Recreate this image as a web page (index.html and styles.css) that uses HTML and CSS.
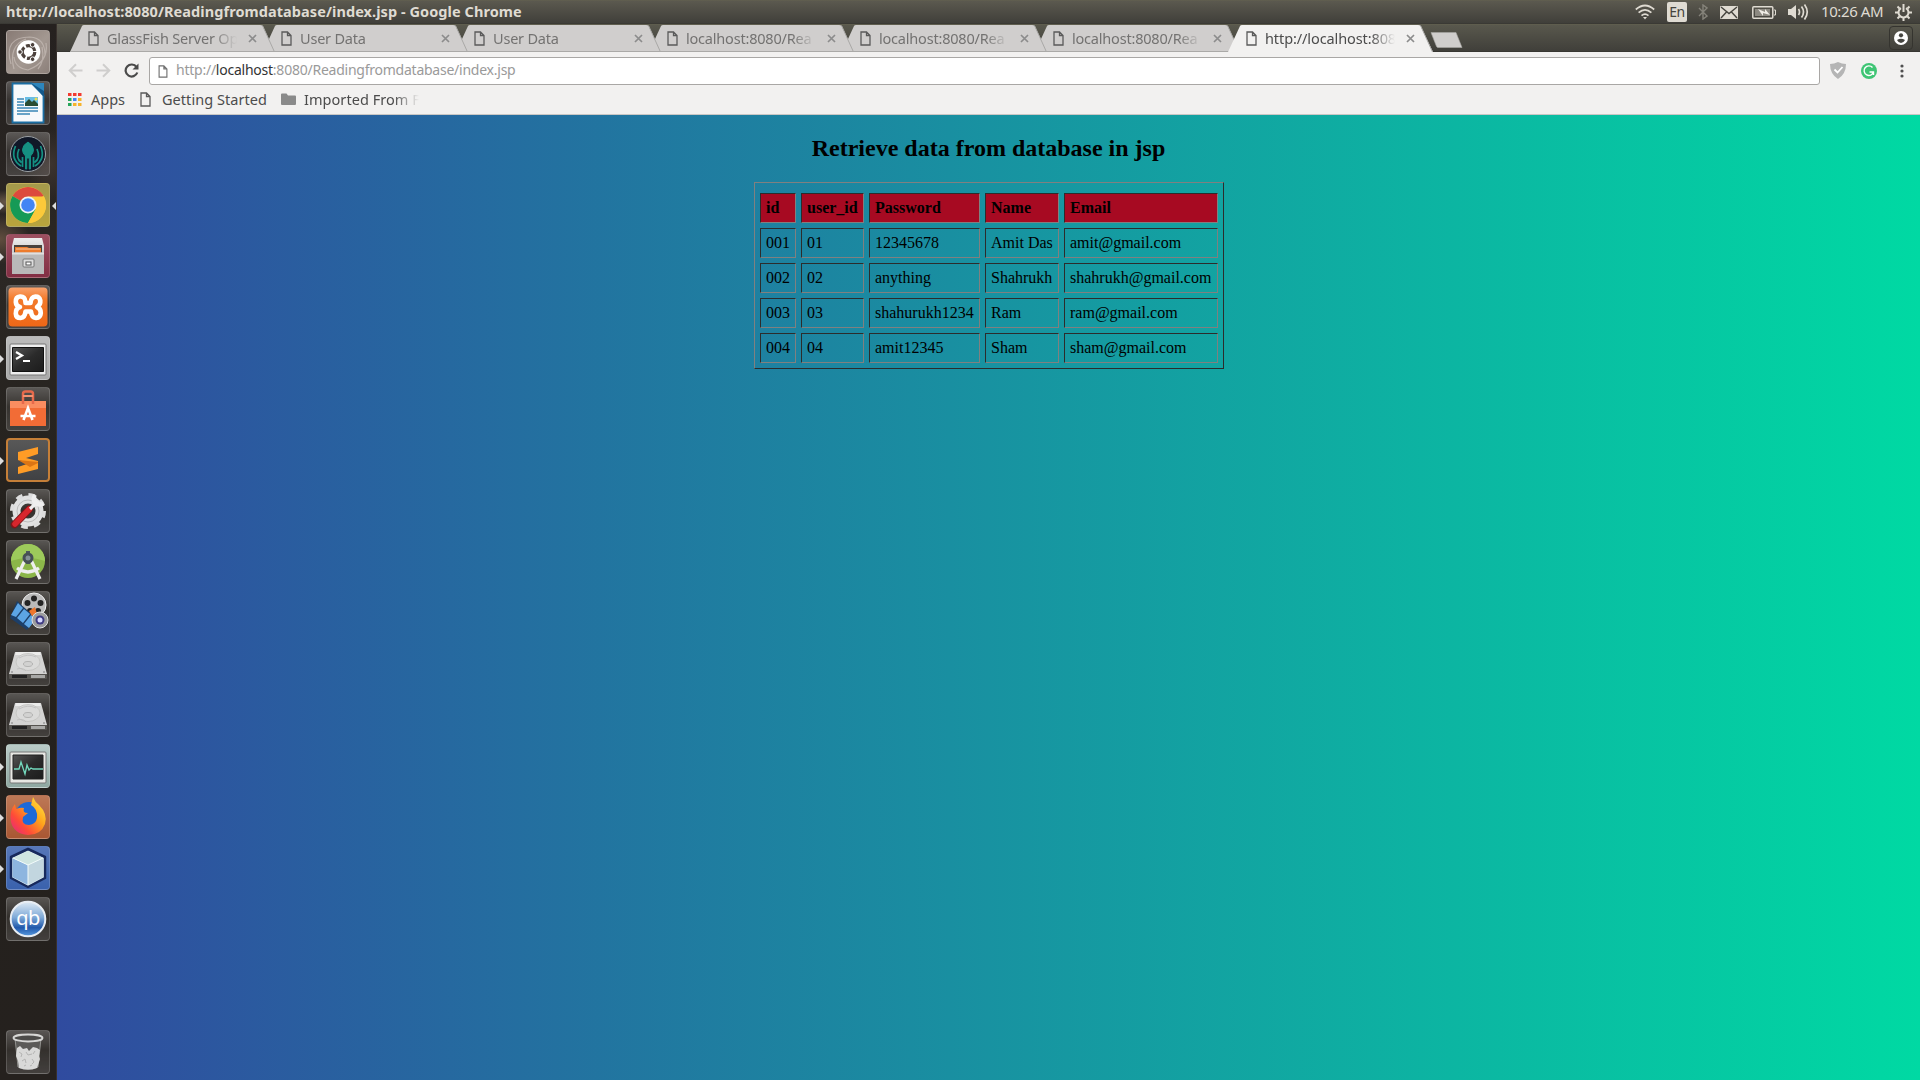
FILE: index.html
```html
<!DOCTYPE html>
<html lang="en">
<head>
<meta charset="utf-8">
<title>http://localhost:8080/Readingfromdatabase/index.jsp</title>
<link rel="stylesheet" href="styles.css">
</head>
<body>
<svg class="defs" width="0" height="0" aria-hidden="true">
  <defs>
    <symbol id="doc" viewBox="0 0 11 15"><path d="M1 1h5.500L10 4.500V14H1zM6.500 1v3.500H10" fill="none" stroke="currentColor" stroke-width="1.300"/></symbol>
    <symbol id="close" viewBox="0 0 9 9"><path d="M1 1l7 7M8 1L1 8" stroke="#8c8c8c" stroke-width="1.700"/></symbol>
    <symbol id="tab-shape" viewBox="0 0 205 28"><path d="M0 28L12 2Q12.500 1 14 1H190Q192 1 192.700 2L205 28z" fill="currentColor"/><path d="M192.500 1.500L204.500 28" stroke="#a9a8a6" fill="none"/></symbol>
    <symbol id="disk" viewBox="0 0 44 44">
      <path d="M3 31h38v5q0 1-1 1H4q-1 0-1-1z" fill="#55534f"/><path d="M6 33h15v3H6z" fill="#222"/><path d="M25 33h14v3H25z" fill="#a8a8a6"/>
      <path d="M9 10h26l6 22H3z" fill="#d3d3d2"/><path d="M10 10h24l1 3H9z" fill="#ececeb"/>
      <ellipse cx="22" cy="20" rx="12" ry="8.500" fill="#dadad9" stroke="#c0c0be" stroke-width=".8"/><ellipse cx="22" cy="22" rx="4.500" ry="2.500" fill="#d2d2d1" stroke="#a9a9a8" stroke-width=".8"/>
      <path d="M13 16q9-5 17-1M11 27q6-2 9 2" stroke="#bbb" stroke-width=".8" fill="none"/><circle cx="6" cy="30" r=".8" fill="#777"/><circle cx="38" cy="30" r=".8" fill="#777"/>
    </symbol>
    <linearGradient id="metal" x2="0" y2="1"><stop stop-color="#eee"/><stop offset="1" stop-color="#999"/></linearGradient>
    <linearGradient id="orange" x2="0" y2="1"><stop stop-color="#f9a26c"/><stop offset=".3" stop-color="#f37a2b"/><stop offset="1" stop-color="#ee6717"/></linearGradient>
    <linearGradient id="screen" x2="1" y2="1"><stop stop-color="#555"/><stop offset=".5" stop-color="#2b2b2b"/><stop offset="1" stop-color="#1c1c1c"/></linearGradient>
    <linearGradient id="fox" x1="1" x2="0" y2="1"><stop stop-color="#fff04a"/><stop offset=".4" stop-color="#ffa41c"/><stop offset=".7" stop-color="#ff4b38"/><stop offset="1" stop-color="#e0208c"/></linearGradient>
    <linearGradient id="qb" x2="0" y2="1"><stop stop-color="#dfeaf4"/><stop offset=".45" stop-color="#7faad8"/><stop offset=".75" stop-color="#2159ab"/><stop offset="1" stop-color="#5a9be0"/></linearGradient>
  </defs>
</svg>
<div class="desktop">
  <header class="panel">
    <div class="window-title">http://localhost:8080/Readingfromdatabase/index.jsp - Google Chrome</div>
    <div class="indicators">
      <svg class="wifi" width="20" height="16" viewBox="0 0 20 16" fill="none" stroke="#dfdbd2" stroke-width="1.700"><path d="M.8 5.500Q10-2.500 19.200 5.500M3.600 8.700Q10 3 16.400 8.700M6.500 11.600Q10 8.500 13.500 11.600"/><path d="M8 13h4l-2 2.500z" fill="#dfdbd2" stroke="none"/></svg>
      <span class="lang">En</span>
      <svg class="bluetooth" width="10" height="16" viewBox="0 0 10 16" fill="none" stroke="#85837a" stroke-width="1.400"><path d="M1 4l8 8-4 3V1l4 3-8 8"/></svg>
      <svg class="mail" width="18" height="13" viewBox="0 0 18 13"><rect width="18" height="13" rx="1" fill="#dfdbd2"/><path d="M1 1l8 6.500L17 1M1 12l5.500-6M17 12l-5.500-6" fill="none" stroke="#45443e" stroke-width="1.400"/></svg>
      <svg class="battery" width="24" height="13" viewBox="0 0 24 13"><rect x=".8" y=".8" width="20" height="11.400" rx="1" fill="none" stroke="#dfdbd2" stroke-width="1.500"/><path d="M3 3h15v7H3z" fill="#8c8981"/><path d="M22 4h1.500v5H22" fill="none" stroke="#dfdbd2"/><path d="M6 3l7 3V3l5 6-7-2v3z" fill="#efece5"/></svg>
      <svg class="volume" width="21" height="18" viewBox="0 0 21 18"><path d="M0 6h3l5-4v14l-5-4H0z" fill="#dfdbd2"/><path d="M10.500 6q2 3 0 6M13.500 3.500q4 5.500 0 11M16.500 1.500q5.500 7.500 0 15" fill="none" stroke="#dfdbd2" stroke-width="1.700"/></svg>
      <span class="clock">10:26 AM</span>
      <svg class="gear" width="17" height="17" viewBox="0 0 17 17" fill="none" stroke="#dfdbd2" stroke-width="2"><path d="M6 4.200A5 5 0 1 0 11 4.200M8.500 0v8"/><path d="M2.500 2.500l2 2M14.500 2.500l-2 2M0 8.500h3M14 8.500h3M2.500 14.500l2-2M14.500 14.500l-2-2M8.500 14v3"/></svg>
    </div>
  </header>
  <div class="workspace">
    <nav class="launcher">
      <div class="tile dash"><svg viewBox="0 0 44 44"><g fill="none" stroke="#c7beb8" stroke-width="1.200" opacity=".7"><path d="M5 34Q-3 7 24 7Q39 8 39 25M8 39Q2 16 20 9M40 13Q43 32 22 40Q9 38 8 27M32 39Q39 31 36 17"/></g><circle cx="22.500" cy="22" r="11.800" fill="#fff"/><circle cx="22.500" cy="22" r="6.300" fill="none" stroke="#4c413c" stroke-width="3.200" stroke-dasharray="11.200 2"/><g fill="#4c413c" stroke="#fff"><circle cx="14" cy="22" r="2.300"/><circle cx="26.600" cy="14.800" r="2.300"/><circle cx="26.600" cy="29.200" r="2.300"/></g></svg></div>
      <div class="tile glass"><svg viewBox="0 0 44 44"><path d="M6.500 2.500H26L37.500 14v27.500h-31z" fill="#f6f9fb" stroke="#1b6ea3" stroke-width="1.800"/><path d="M25 2h13v14z" fill="#2d86bd"/><path d="M25 2l13 14V10z" fill="#14588a"/><path d="M11 18h7M11 21h7M11 24h7M11 27h21M11 30h21M11 33h13" stroke="#3887b7" stroke-width="1.600"/><path d="M19 16h13v9H19z" fill="#68bde4"/><path d="M19 25v-3l4-4 3 3 2-2 4 4v2z" fill="#294c32"/><circle cx="30" cy="18" r="1.500" fill="#eadb55"/></svg></div>
      <div class="tile glass"><svg viewBox="0 0 44 44"><circle cx="22" cy="22" r="17.500" fill="#101727" stroke="#9ba1a5"/><path d="M22 10q5.500 3 5.500 8 0 3-3 6v13h-1.200V26h-2.600v11h-1.200V24q-3-3-3-6 0-5 5.500-8" fill="#159082" stroke="#159082"/><g fill="none" stroke="#159082" stroke-width="1.700"><path d="M9.500 14Q4 27 15 34M13 17Q9 26 15.500 30.500M34.500 14q5.500 13-5.500 20M31 17q4 9-2.500 13.500M16.500 25v10M27.500 25v10"/></g></svg></div>
      <div class="tile chrome running focused"><svg viewBox="0 0 44 44"><circle cx="22" cy="22" r="18" fill="#fbc93a"/><path d="M22 22L6.500 13A18 18 0 0 1 37.600 13z" fill="#dc4a3d"/><path d="M22 22L6.500 13A18 18 0 0 0 22 40l7.800-14z" fill="#159a56"/><path d="M22 13.500H38A18 18 0 0 1 22 40l7.500-13.500z" fill="#fbc93a"/><circle cx="22" cy="22" r="8.500" fill="#eff4f5"/><circle cx="22" cy="22" r="6.800" fill="#4285f4"/></svg></div>
      <div class="tile files running"><svg viewBox="0 0 44 44"><path d="M8 4h28l2 8v28H6V12z" fill="url(#metal)"/><path d="M8 11h28v8H8z" fill="#49423d"/><path d="M9 13h12l2 1h12v5H9z" fill="#ed7c2d"/><path d="M10 15h24" stroke="#f7c6a1"/><path d="M6 18.500h32V40H6z" fill="#b9b9b9"/><path d="M6 18.500h32v2H6z" fill="#e0e0e0"/><rect x="17" y="25" width="11" height="8" rx="1" fill="#ddd" stroke="#777"/><rect x="20" y="28" width="5" height="3" fill="#fff" stroke="#555"/></svg></div>
      <div class="tile glass"><svg viewBox="0 0 44 44"><rect x="2.500" y="2.500" width="39" height="39" rx="4" fill="url(#orange)"/><path d="M19.500 17Q19 11 14 11.500 9.500 12 9.800 17 10 21 14 22 9.500 23.500 9.800 28.500 10 33 14.500 33 19 32.500 19.500 26.500H25Q25.500 32.500 30 33 34.500 32.500 34.800 28 34.800 23.500 31 22 34.800 20 34.300 15.500 33.500 11.500 29.500 11.500 25 12 24.500 18H19.500Z" fill="none" stroke="#fff" stroke-width="4.600" stroke-linejoin="round"/></svg></div>
      <div class="tile terminal running"><svg viewBox="0 0 44 44"><rect x="4" y="8" width="36" height="31" rx="1" fill="#eee" stroke="#777"/><path d="M6.500 11.500h31v24h-31z" fill="url(#screen)" stroke="#111"/><path d="M10 16l6 3.500-6 3.500M17 25h7" fill="none" stroke="#fff" stroke-width="2.200"/></svg></div>
      <div class="tile glass"><svg viewBox="0 0 44 44"><path d="M4 14h36v25H4z" fill="#f26c36"/><path d="M4 14h36v7H4z" fill="#fa8d60"/><path d="M17 17V7q0-2.500 2.500-2.500h5Q27 4.500 27 7v10" fill="none" stroke="#e6694b" stroke-width="2.500"/><path d="M17 9h10" stroke="#f29271" stroke-width="2"/><path d="M17.500 33l4.500-12 4.500 12M14.500 29h15" fill="none" stroke="#fff" stroke-width="2.600"/></svg></div>
      <div class="tile sublime running"><svg viewBox="0 0 44 44"><path d="M12 14l20-5v7l-12 4 12 3v8l-20 5v-7l12-4-12-3z" fill="#ff9c26"/><path d="M12 22l20 2v1l-8 4z" fill="#dc7514"/></svg></div>
      <div class="tile glass"><svg viewBox="0 0 44 44"><circle cx="22" cy="22" r="11.500" fill="none" stroke="#e1e1e1" stroke-width="8"/><circle cx="22" cy="22" r="16" fill="none" stroke="#ddd" stroke-width="4" stroke-dasharray="6.500 6.060"/><circle cx="22" cy="22" r="11" fill="none" stroke="#bcbcbc"/><path d="M8.500 35.500L23 20.500" stroke="#7f1618" stroke-width="7.500" stroke-linecap="round"/><path d="M9 35L23.500 20" stroke="#d8262d" stroke-width="5.500" stroke-linecap="round"/><path d="M24 20l7-7M29 6q-2 8 8 9M29 6q-4 4 0 8.500 4 3 8.500.5" fill="none" stroke="#eee" stroke-width="3.200"/></svg></div>
      <div class="tile glass"><svg viewBox="0 0 44 44"><circle cx="22" cy="21" r="17" fill="#8bb649"/><path d="M5 21a17 17 0 0 1 34 0q-17-6-34 0" fill="#9dca5b"/><path d="M10 39l9-19M34 39l-9-19M11 28q11 8 22 0" fill="none" stroke="#eee" stroke-width="3.200"/><path d="M22 11v13" stroke="#4c585c" stroke-width="4"/><circle cx="22" cy="18" r="4" fill="#839095" stroke="#465055" stroke-width="3"/></svg></div>
      <div class="tile glass"><svg viewBox="0 0 44 44"><circle cx="28" cy="14" r="12" fill="#bbb" stroke="#eee"/><g fill="#242424"><circle cx="28" cy="7.500" r="3"/><circle cx="34.500" cy="12" r="3"/><circle cx="32" cy="20" r="3"/><circle cx="21.500" cy="12" r="3"/><circle cx="24" cy="20" r="3"/></g><path d="M11 10l19 17-9 12L4 27z" fill="#1c3f69"/><path d="M12 12l5 5-7 9-5-2zM18 18l6 5-7 9-6-5zM25 24l5 4-7 9-5-4z" fill="#5ca5e5"/><path d="M23 20l6-4 2 7-5 2z" fill="#ee762d"/><circle cx="34" cy="29" r="8" fill="#9c9c9e" stroke="#e1e1e1"/><circle cx="34" cy="29" r="4.500" fill="#403c83"/><circle cx="34" cy="29" r="2.500" fill="#d6d8ff"/></svg></div>
      <div class="tile glass"><svg><use href="#disk"/></svg></div>
      <div class="tile glass"><svg><use href="#disk"/></svg></div>
      <div class="tile monitor running"><svg viewBox="0 0 44 44"><rect x="4" y="8" width="36" height="31" rx="1" fill="#e7e7e3" stroke="#777"/><path d="M7 11h30v24H7z" fill="url(#screen)" stroke="#222"/><path d="M8 25h5l2-7 4 12 2-9 2 5 2-2 2 1h10" fill="none" stroke="#73d9bd" stroke-width="1.300"/></svg></div>
      <div class="tile firefox running"><svg viewBox="0 0 44 44"><circle cx="23" cy="21" r="14" fill="#1e69d8"/><path d="M27 2q2 5 6 8 9 9 6 19-4 11-17 11Q8 39 5 27 3 16 9 9l1 5q5-2 8-1-2 5 4 5l-5 4q-2 8 6 8 7-1 8-7 1-9-6-13z" fill="url(#fox)"/></svg></div>
      <div class="tile netbeans running"><svg viewBox="0 0 44 44"><path d="M22 3l17 8v21L22 41 5 32V11z" fill="#dcebed" stroke="#17295c" stroke-width="2.500" stroke-linejoin="round"/><path d="M6.500 12L22 19v20L6.500 31z" fill="#8db5df"/><path d="M22 19l15.500-7v19L22 39z" fill="#c2d6df"/><path d="M22 5l15 7-15 7-15-7z" fill="#cfe5e1"/><path d="M7 12l15 7 15-7M22 19v20" fill="none" stroke="#f1fafa"/></svg></div>
      <div class="tile glass"><svg viewBox="0 0 44 44"><circle cx="22" cy="22" r="17.300" fill="url(#qb)" stroke="#e8edf3" stroke-width="2"/><text class="qb-text" x="22" y="28">qb</text></svg></div>
      <div class="tile glass trash"><svg viewBox="0 0 44 44"><path d="M9 8l3 29q10 5 20 0l3-29" fill="#5b5a58" stroke="#92928f"/><ellipse cx="22" cy="8" rx="14.500" ry="3.500" fill="#4c4b49" stroke="#d6d6d4" stroke-width="1.800"/><path d="M11 18l3-2 3 3 4-1 2 3 4-4 4 1 3 2-1 6 1 3-3 9q-9 3-18 0l-1-7-2-5z" fill="#d9d9d8"/><path d="M13 22l3 2-1 3M20 22l2 3 4-1M29 21l-2 3M16 31l3-2 1 4M26 29l2 3-2 2M18 36l2-1M24 36l2-1" fill="none" stroke="#b4b4b3"/></svg></div>
    </nav>
    <main class="browser">
      <div class="tab-strip">
        <div class="tab"><svg class="shape"><use href="#tab-shape"/></svg><svg class="doc"><use href="#doc"/></svg><span class="label">GlassFish Server Op</span><svg class="close"><use href="#close"/></svg></div>
        <div class="tab"><svg class="shape"><use href="#tab-shape"/></svg><svg class="doc"><use href="#doc"/></svg><span class="label">User Data</span><svg class="close"><use href="#close"/></svg></div>
        <div class="tab"><svg class="shape"><use href="#tab-shape"/></svg><svg class="doc"><use href="#doc"/></svg><span class="label">User Data</span><svg class="close"><use href="#close"/></svg></div>
        <div class="tab"><svg class="shape"><use href="#tab-shape"/></svg><svg class="doc"><use href="#doc"/></svg><span class="label">localhost:8080/Rea</span><svg class="close"><use href="#close"/></svg></div>
        <div class="tab"><svg class="shape"><use href="#tab-shape"/></svg><svg class="doc"><use href="#doc"/></svg><span class="label">localhost:8080/Rea</span><svg class="close"><use href="#close"/></svg></div>
        <div class="tab"><svg class="shape"><use href="#tab-shape"/></svg><svg class="doc"><use href="#doc"/></svg><span class="label">localhost:8080/Rea</span><svg class="close"><use href="#close"/></svg></div>
        <div class="tab active"><svg class="shape"><use href="#tab-shape"/></svg><svg class="doc"><use href="#doc"/></svg><span class="label">http://localhost:808</span><svg class="close"><use href="#close"/></svg></div>
        <svg class="new-tab" width="33" height="16" viewBox="0 0 33 16"><path d="M1 .5h25l6 15H8q-1 0-1.500-1z" fill="#d0cecc" stroke="#aaa8a4" stroke-width=".6"/></svg>
        <div class="profile"><svg width="14" height="14" viewBox="0 0 14 14"><circle cx="7" cy="7" r="7" fill="#fff"/><circle cx="7" cy="4.300" r="2.100" fill="#454540"/><path d="M3 9q4-2.500 8 0-1.500 3-4 3T3 9" fill="#454540"/></svg></div>
      </div>
      <div class="toolbar">
        <svg class="nav" viewBox="0 0 15 15"><path d="M14.500 7.500H2M8 1.200L1.700 7.500 8 13.800" fill="none" stroke="#cfcecd" stroke-width="2"/></svg>
        <svg class="nav" viewBox="0 0 15 15"><path d="M.5 7.500H13M7 1.200l6.300 6.300L7 13.800" fill="none" stroke="#cfcecd" stroke-width="2"/></svg>
        <svg class="nav" viewBox="0 0 15 15"><path d="M12.500 4A6 6 0 1 0 13.300 9.500" fill="none" stroke="#4a4a4a" stroke-width="2.200"/><path d="M14.500.5v6H8.500z" fill="#4a4a4a"/></svg>
        <div class="omnibox"><svg><use href="#doc"/></svg><span class="url">http://<b>localhost</b>:8080/Readingfromdatabase/index.jsp</span></div>
        <svg class="shield" width="16" height="17" viewBox="0 0 16 17"><path d="M8 0q4 2 8 2 0 10-8 15Q0 12 0 2q4 0 8-2" fill="#b5b5b5"/><path d="M4.500 7.500l3 3 5-5.500" fill="none" stroke="#fff" stroke-width="1.800"/></svg>
        <svg class="grammar" width="16" height="16" viewBox="0 0 16 16"><circle cx="8" cy="8" r="8" fill="#3fc574"/><path d="M11.500 4.500A4.800 4.800 0 1 0 12.500 9M8.500 9h4v3" fill="none" stroke="#fff" stroke-width="1.400"/></svg>
        <svg class="dots" width="4" height="14" viewBox="0 0 4 14" fill="#505050"><circle cx="2" cy="2" r="1.600"/><circle cx="2" cy="7" r="1.600"/><circle cx="2" cy="12" r="1.600"/></svg>
      </div>
      <div class="bookmarks">
        <svg class="apps" width="14" height="13" viewBox="0 0 14 13"><path d="M0 0h3.500v3H0zM5 0h3.500v3H5zM10 0h3.500v3H10z" fill="#f33b30"/><path d="M0 5h3.500v3H0zM0 10h3.500v3H0z" fill="#26a65a"/><path d="M5 5h3.500v3H5z" fill="#4285f4"/><path d="M10 5h3.500v3H10zM5 10h3.500v3H5zM10 10h3.500v3H10z" fill="#f6b32b"/></svg><span class="bm-apps">Apps</span>
        <svg class="bm-doc"><use href="#doc"/></svg><span class="bm-start">Getting Started</span>
        <svg class="folder" width="15" height="13" viewBox="0 0 15 13"><path d="M0 1.500Q0 .5 1 .5h4.500L7 2.500h7q1 0 1 1V11q0 1-1 1H1q-1 0-1-1z" fill="#8a8a8a"/></svg><span class="bm-import">Imported From F</span>
      </div>
      <section class="page">
        <h2>Retrieve data from database in jsp</h2>
        <table class="users">
          <colgroup><col class="c-id"><col class="c-user"><col class="c-pass"><col class="c-name"><col class="c-mail"></colgroup>
          <tr></tr>
          <tr class="head"><td>id</td><td>user_id</td><td>Password</td><td>Name</td><td>Email</td></tr>
          <tr><td>001</td><td>01</td><td>12345678</td><td>Amit Das</td><td>amit@gmail.com</td></tr>
          <tr><td>002</td><td>02</td><td>anything</td><td>Shahrukh</td><td>shahrukh@gmail.com</td></tr>
          <tr><td>003</td><td>03</td><td>shahurukh1234</td><td>Ram</td><td>ram@gmail.com</td></tr>
          <tr><td>004</td><td>04</td><td>amit12345</td><td>Sham</td><td>sham@gmail.com</td></tr>
        </table>
      </section>
    </main>
  </div>
</div>
</body>
</html>
```
FILE: styles.css
```css
* { box-sizing: border-box; }
body { margin: 0; overflow: hidden; font-family: "Noto Sans", sans-serif; font-size: 14.5px; }
svg { display: block; flex: none; }
.defs { position: absolute; }
.desktop { width: 1920px; height: 1080px; display: flex; flex-direction: column; }

.panel { height: 24px; flex: none; display: flex; justify-content: space-between; align-items: center; padding: 0 8px 0 6px; color: #dfdbd2; background: linear-gradient(#64624f 0, #5b594f 1px, #403f3a 23px, #35342f); white-space: nowrap; }
.window-title { font-weight: bold; font-size: 14.5px; letter-spacing: .07px; line-height: 22px; padding-bottom: 2px; }
.indicators { display: flex; align-items: center; }
.lang { width: 20px; height: 20px; margin: 0 11px 0 12px; border-radius: 2px; background: #dfdbd2; color: #45443e; font-size: 14px; line-height: 20px; letter-spacing: -.5px; text-align: center; }
.mail { margin-left: 12px; }
.battery { margin-left: 14px; }
.volume { margin-left: 12px; }
.clock { width: 62px; margin: 0 12px 0 12px; font-size: 15px; letter-spacing: -.4px; line-height: 22px; padding-bottom: 2px; }

.workspace { flex: 1; display: flex; min-height: 0; }
.launcher { width: 57px; flex: none; display: flex; flex-direction: column; gap: 7px; padding: 6px 7px 6px 6px; border-right: 1px solid #37302c;
  background: radial-gradient(ellipse 35px 12px at 8px 178px, #69594a, transparent), radial-gradient(ellipse 30px 25px at 0 215px, #604d3e, transparent), radial-gradient(ellipse 25px 35px at 50px 140px, #3d3430, transparent), linear-gradient(#25211f, #2b2724 250px, #24211d 500px, #25211e); }
.tile { position: relative; width: 44px; height: 44px; flex: none; border-radius: 4px; border: 1px solid rgba(255,255,255,.16); }
.tile svg { width: 44px; height: 44px; margin: -1px; }
.glass { background: linear-gradient(rgba(255,255,255,.24), rgba(255,255,255,.07) 45%, rgba(255,255,255,.14)); }
.dash { background: linear-gradient(135deg, #887b75, #a39891 55%, #8c807a); }
.chrome { background: linear-gradient(#a49a4c, #b9a43c); }
.files { background: linear-gradient(#9d5060, #822e43); }
.terminal { background: linear-gradient(#bbb, #aaa); }
.sublime { background: linear-gradient(#585858, #404144); border: 2px solid #c57f38; }
.sublime svg { margin: -2px; }
.monitor { background: linear-gradient(#b9cbc7, #8fa8a2); }
.firefox { background: linear-gradient(#bd7856, #a95733); }
.netbeans { background: linear-gradient(#5777b8, #3a62ad); }
.trash { margin-top: auto; }
.running::before, .focused::after { content: ""; position: absolute; top: 18px; border: 4px solid transparent; }
.running::before { left: -7px; border-left-color: #ddd; border-right: 0; }
.sublime::before { left: -8px; top: 17px; }
.focused::after { right: -7px; border-right-color: #ddd; border-left: 0; }
.qb-text { font: 20px "Noto Sans", sans-serif; fill: #fff; text-anchor: middle; letter-spacing: -.5px; }

.browser { flex: 1; display: flex; flex-direction: column; min-width: 0; background: #f2f1f0; }
.tab-strip { height: 29px; flex: none; display: flex; padding: 0 7px 0 13px; background: linear-gradient(#64624f 0, #59584d 1px, #403f3a 27px, #2f2e2a 28px, #f2f1f0 28px); isolation: isolate; }
.tab { position: relative; width: 205px; height: 28px; margin-right: -12px; flex: none; display: flex; align-items: center; padding: 2px 18px 0 18px; color: #d0cecd; border-bottom: 1px solid transparent; }
.tab::after { content: ""; position: absolute; left: 0; right: 0; bottom: -1px; height: 1px; background: #aaa9a7; }
.tab:nth-child(1) { z-index: 6; } .tab:nth-child(2) { z-index: 5; } .tab:nth-child(3) { z-index: 4; } .tab:nth-child(4) { z-index: 3; } .tab:nth-child(5) { z-index: 2; } .tab:nth-child(6) { z-index: 1; }
.tab.active { z-index: 7; color: #f2f1f0; }
.tab.active::after { display: none; }
.shape { position: absolute; inset: 0; width: 205px; height: 28px; z-index: -1; }
.tab .doc { width: 11px; height: 15px; color: #5a5a5a; }
.label { margin-left: 8px; width: 134px; white-space: nowrap; color: #737271; letter-spacing: -.2px; line-height: 22px; padding-bottom: 2px; -webkit-mask-image: linear-gradient(90deg, #000 106px, transparent 130px); mask-image: linear-gradient(90deg, #000 106px, transparent 130px); }
.active .label { color: #4c4c4c; letter-spacing: -.1px; }
.close { width: 9px; height: 9px; margin-left: 7px; }
.new-tab { margin: 8px 0 0 9px; }
.profile { width: 24px; height: 24px; margin: 2px 0 0 auto; display: flex; align-items: center; justify-content: center; border: 1px solid #35342f; border-radius: 4px; }

.toolbar { height: 35px; flex: none; display: flex; align-items: center; padding: 0 16px 0 11px; }
.nav { width: 15px; height: 15px; margin-right: 13px; }
.omnibox { width: 1671px; height: 28px; margin: 1px 10px 0 -3px; padding-left: 8px; display: flex; align-items: center; background: #fff; border: 1px solid #a9a7a5; border-radius: 3px; }
.omnibox svg { width: 10px; height: 13px; color: #707070; }
.url { margin-left: 8px; color: #9a9a9a; font-size: 14px; letter-spacing: -.24px; line-height: 22px; padding-bottom: 2px; }
.url b { font-weight: normal; color: #333; }
.grammar { margin-left: 15px; }
.dots { margin-left: 23px; }
.bookmarks { height: 27px; flex: none; display: flex; align-items: center; padding: 0 0 3px 11px; border-bottom: 1px solid #c9c7c5; color: #4c4c4c; white-space: nowrap; }
.bookmarks span { flex: none; line-height: 20px; padding-bottom: 2px; }
.bm-apps { width: 49px; margin-left: 9px; }
.bm-doc { width: 11px; height: 15px; color: #5a5a5a; }
.bm-start { width: 108px; margin-left: 11px; letter-spacing: .05px; }
.folder { margin-left: 11px; }
.bm-import { width: 116px; margin-left: 8px; letter-spacing: .05px; -webkit-mask-image: linear-gradient(90deg, #000 90px, transparent 115px); mask-image: linear-gradient(90deg, #000 90px, transparent 115px); }

.page { flex: 1; padding: 19.9px 8px 0; background: linear-gradient(90deg, #304b9f, #00d9a3); color: #000; font-family: "Liberation Serif", serif; font-size: 16px; }
.page h2 { margin: 0 0 19.9px; font-size: 24px; line-height: 27px; text-align: center; }
.users { width: 470px; margin: 0 auto 0 689px; table-layout: fixed; border-collapse: separate; border-spacing: 5px; border: 1px solid; border-color: #808080 #2c2c2c #2c2c2c #808080; }
.c-id { width: 36px; } .c-user { width: 63px; } .c-pass { width: 111px; } .c-name { width: 74px; } .c-mail { width: 154px; }
.users td { height: 30px; padding: 5px 4px 5px 5px; line-height: 18px; white-space: nowrap; border: 1px solid; border-color: #2c2c2c #808080 #808080 #2c2c2c; }
.head { background: #a70a22; font-weight: bold; }
```
